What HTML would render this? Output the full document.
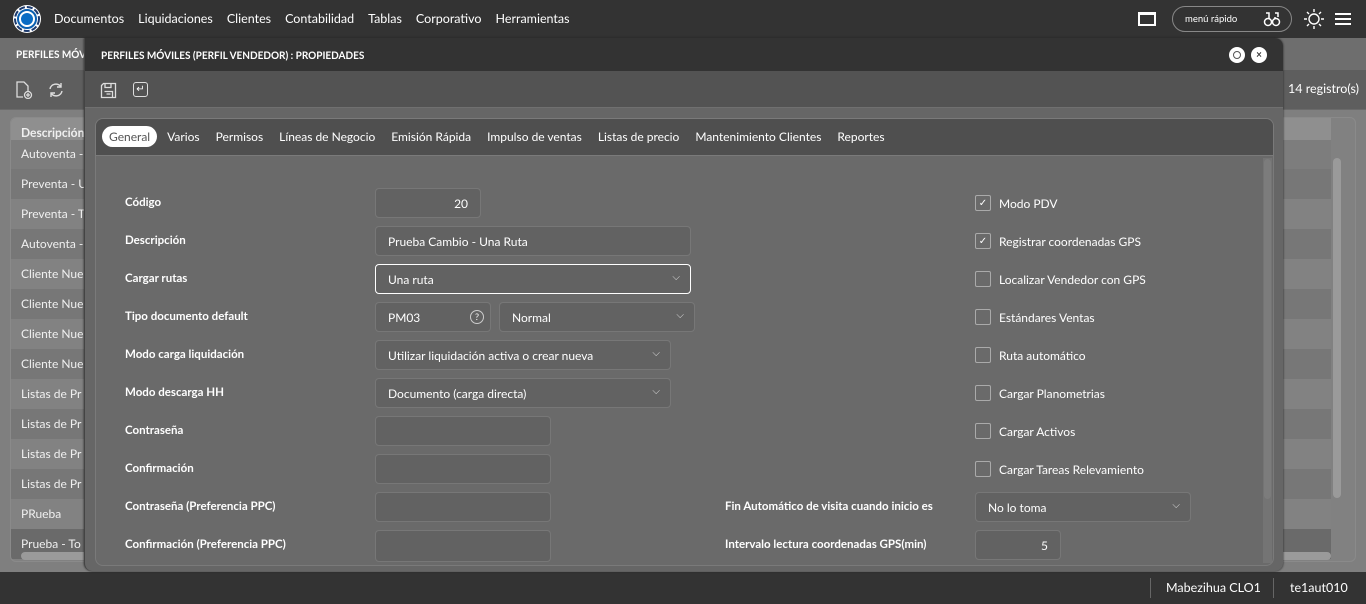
<!DOCTYPE html>
<html><head><meta charset="utf-8"><style>
*{box-sizing:border-box;margin:0;padding:0}
body{width:1366px;height:604px;overflow:hidden;background:#7f7f7f;font-family:"Lato","Liberation Sans",sans-serif;color:#fff;position:relative}
.a{position:absolute}
.top{left:0;top:0;width:1366px;height:38px;background:#333}
.nav{left:54px;top:11px;font-size:12.5px;white-space:nowrap;word-spacing:0}
.nav span{margin-right:14px;letter-spacing:0}
.sub{left:0;top:38px;width:1366px;height:32px;background:#6e6e6e}
.tb{left:0;top:70px;width:1366px;height:40px;background:#5e5e5e;border-bottom:1px solid #6a6a6a}
.list{left:10px;top:117px;width:1346px;height:445px;background:#818181;border:1px solid #8a8a8a;border-radius:6px;overflow:hidden}
.row{position:absolute;left:0;width:1320px;height:30px;font-size:12px;padding:7px 10px;color:#f0f0f0}
.foot{left:0;top:572px;width:1366px;height:32px;background:#333;font-size:12.5px}
.modal{left:84px;top:38px;width:1199px;height:533px;background:#666;border-radius:0 8px 8px 8px;box-shadow:0 0 2px #222;border-left:1px solid #444;overflow:hidden}
.mh{left:0;top:0;width:1199px;height:33px;background:#333;font-size:10px;font-weight:bold;padding:12px 16px}
.mt{left:0;top:33px;width:1199px;height:37px;background:#535353;border-bottom:1px solid #707070}
.panel{left:10px;top:80px;width:1179px;height:448px;background:#6a6a6a;border:1px solid #7a7a7a;border-radius:8px;overflow:hidden}
.tabs{left:0;top:0;width:1179px;height:37px;background:#4f4f4f;border-bottom:1px solid #7a7a7a;font-size:12px;padding:7px 0 0 6px;white-space:nowrap}
.tabs span{display:inline-block;padding:3px 6px;margin-right:4px;border-radius:12px}
.tabs span.on{background:#fff;color:#555;padding:3px 7px}
.lb{font-size:11.5px;font-weight:bold;left:125px}
.in{height:30px;background:#626262;border:1px solid #777;border-radius:4px;font-size:12px;padding:7px 12px}
.ck{width:16px;height:16px;border:1px solid #aaa;border-radius:2px;left:975px;font-size:10px;line-height:14px;text-align:center}
.cl{left:999px;font-size:12px}
.chev{position:absolute;right:10px;top:6px;font-size:10px;color:#ddd}
</style></head><body>
<div class="a top"></div>
<svg class="a" style="left:12px;top:4px" width="30" height="30" viewBox="0 0 30 30"><circle cx="15" cy="15" r="14" fill="#fff"/><circle cx="15" cy="15" r="12" fill="none" stroke="#1c3a6e" stroke-width="2" stroke-dasharray="6 2"/><circle cx="15" cy="15" r="9" fill="none" stroke="#0a5fb0" stroke-width="2"/><circle cx="15" cy="15" r="6" fill="#0a6cc4"/></svg>
<div class="a nav"><span>Documentos</span><span>Liquidaciones</span><span>Clientes</span><span>Contabilidad</span><span>Tablas</span><span>Corporativo</span><span>Herramientas</span></div>
<div class="a" style="left:1138px;top:12px;width:18px;height:14px;border:2px solid #fff;border-top-width:3px"></div>
<div class="a" style="left:1172px;top:6px;width:120px;height:26px;border:1px solid #888;border-radius:13px;font-size:9.5px;padding:7px 12px">menú rápido
<svg class="a" style="right:10px;top:4px" width="18" height="16" viewBox="0 0 18 16" fill="none" stroke="#fff" stroke-width="1.5"><path d="M3 2h3v4M12 2h3v4M6 6v2M12 6v2"/><circle cx="5" cy="11" r="3.5"/><circle cx="13" cy="11" r="3.5"/></svg></div>
<svg class="a" style="left:1303px;top:8px" width="22" height="22" viewBox="0 0 22 22" stroke="#fff" fill="none" stroke-width="1.4"><circle cx="11" cy="11" r="5"/><path d="M11 1v3M11 18v3M1 11h3M18 11h3M4 4l2 2M16 16l2 2M4 18l2-2M16 6l2-2"/></svg>
<div class="a" style="left:1335px;top:13px;width:16px;height:2px;background:#fff;box-shadow:0 5px 0 #fff,0 10px 0 #fff"></div>
<div class="a sub"><div class="a" style="left:16px;top:11px;font-size:10px;font-weight:bold">PERFILES MÓVILES</div></div>
<div class="a tb">
<svg class="a" style="left:15px;top:11px" width="18" height="18" viewBox="0 0 18 18" fill="none" stroke="#ddd" stroke-width="1.3"><path d="M8 16H2V1h7l4 4v5"/><circle cx="13" cy="14" r="3.5"/><path d="M13 12v4M11 14h4"/></svg>
<svg class="a" style="left:47px;top:11px" width="18" height="18" viewBox="0 0 18 18" fill="none" stroke="#ddd" stroke-width="1.4"><path d="M3 8a6 6 0 0 1 11-2M15 10a6 6 0 0 1-11 2"/><path d="M14 2v4h-4M4 16v-4h4"/></svg>
<div class="a" style="left:1288px;top:11px;font-size:12.5px">14 registro(s)</div></div>
<div class="a list">
<div class="row" style="top:0;background:#8f8f8f;font-weight:bold;padding-top:7px">Descripción</div>
<div class="row" style="top:22px;background:#7d7d7d;height:29px;padding-top:6px">Autoventa -</div>
<div class="row" style="top:51px;background:#777">Preventa - U</div>
<div class="row" style="top:81px;background:#828282">Preventa - T</div>
<div class="row" style="top:111px;background:#777">Autoventa -</div>
<div class="row" style="top:141px;background:#828282">Cliente Nue</div>
<div class="row" style="top:171px;background:#777">Cliente Nue</div>
<div class="row" style="top:201px;background:#828282">Cliente Nue</div>
<div class="row" style="top:231px;background:#777">Cliente Nue</div>
<div class="row" style="top:261px;background:#828282">Listas de Pr</div>
<div class="row" style="top:291px;background:#777">Listas de Pr</div>
<div class="row" style="top:321px;background:#828282">Listas de Pr</div>
<div class="row" style="top:351px;background:#777">Listas de Pr</div>
<div class="row" style="top:381px;background:#828282">PRueba</div>
<div class="row" style="top:411px;background:#6a6a6a">Prueba - To</div>
<div class="a" style="left:1322px;top:40px;width:8px;height:340px;background:#9a9a9a;border-radius:4px"></div>
<div class="a" style="left:10px;top:434px;width:1310px;height:8px;background:#9a9a9a;border-radius:4px"></div>
</div>
<div class="a foot"><div class="a" style="left:1150px;top:6px;width:1px;height:20px;background:#666"></div><div class="a" style="left:1166px;top:8px">Mabezihua CLO1</div><div class="a" style="left:1273px;top:6px;width:1px;height:20px;background:#666"></div><div class="a" style="left:1290px;top:8px">te1aut010</div></div>

<div class="a modal">
<div class="a mh">PERFILES MÓVILES (PERFIL VENDEDOR) : PROPIEDADES</div>
<div class="a" style="left:1144px;top:9px;width:16px;height:16px;border-radius:50%;background:#fff"><div style="margin:4px;width:8px;height:8px;border:1.5px solid #555;border-radius:50%"></div></div>
<div class="a" style="left:1166px;top:9px;width:16px;height:16px;border-radius:50%;background:#fff;color:#333;font-size:10px;text-align:center;line-height:16px;font-weight:bold">×</div>
<div class="a mt">
<svg class="a" style="left:15px;top:11px" width="17" height="17" viewBox="0 0 17 17" fill="none" stroke="#ddd" stroke-width="1.3"><path d="M1.5 3.5l2-2h12v14h-14z"/><path d="M5 1.5v4h6v-4M4.5 9.5h8v6M6.5 12h4"/></svg>
<div class="a" style="left:48px;top:11px;width:15px;height:15px;border:1.5px solid #ddd;border-radius:3px;font-size:10px;line-height:12px;text-align:center">&#x21b5;</div></div>
<div class="a panel">
<div class="a tabs"><span class="on">General</span><span>Varios</span><span>Permisos</span><span>Líneas de Negocio</span><span>Emisión Rápida</span><span>Impulso de ventas</span><span>Listas de precio</span><span>Mantenimiento Clientes</span><span>Reportes</span></div>
<div class="a" style="left:1167px;top:39px;width:9px;height:405px;background:#747474"><div style="margin:1px;width:7px;height:340px;background:#7c7c7c;border-radius:4px"></div></div>
</div>
</div>

<div class="a lb" style="top:196px">Código</div>
<div class="a lb" style="top:234px">Descripción</div>
<div class="a lb" style="top:272px">Cargar rutas</div>
<div class="a lb" style="top:310px">Tipo documento default</div>
<div class="a lb" style="top:348px">Modo carga liquidación</div>
<div class="a lb" style="top:386px">Modo descarga HH</div>
<div class="a lb" style="top:424px">Contraseña</div>
<div class="a lb" style="top:462px">Confirmación</div>
<div class="a lb" style="top:500px">Contraseña (Preferencia PPC)</div>
<div class="a lb" style="top:538px">Confirmación (Preferencia PPC)</div>

<div class="a in" style="left:375px;top:188px;width:106px;text-align:right">20</div>
<div class="a in" style="left:375px;top:226px;width:316px">Prueba Cambio - Una Ruta</div>
<div class="a in" style="left:375px;top:264px;width:316px;border-color:#fff">Una ruta<span class="chev">&#x2335;</span></div>
<div class="a in" style="left:375px;top:302px;width:116px">PM03<span class="a" style="right:6px;top:7px;width:14px;height:14px;border:1px solid #ccc;border-radius:50%;font-size:9px;text-align:center;line-height:12px">?</span></div>
<div class="a in" style="left:499px;top:302px;width:196px">Normal<span class="chev">&#x2335;</span></div>
<div class="a in" style="left:375px;top:340px;width:296px">Utilizar liquidación activa o crear nueva<span class="chev">&#x2335;</span></div>
<div class="a in" style="left:375px;top:378px;width:296px">Documento (carga directa)<span class="chev">&#x2335;</span></div>
<div class="a in" style="left:375px;top:416px;width:176px"></div>
<div class="a in" style="left:375px;top:454px;width:176px"></div>
<div class="a in" style="left:375px;top:492px;width:176px"></div>
<div class="a in" style="left:375px;top:530px;width:176px;height:32px"></div>

<div class="a ck" style="top:195px">&#x2713;</div><div class="a cl" style="top:196px">Modo PDV</div>
<div class="a ck" style="top:233px">&#x2713;</div><div class="a cl" style="top:234px">Registrar coordenadas GPS</div>
<div class="a ck" style="top:271px"></div><div class="a cl" style="top:272px">Localizar Vendedor con GPS</div>
<div class="a ck" style="top:309px"></div><div class="a cl" style="top:310px">Estándares Ventas</div>
<div class="a ck" style="top:347px"></div><div class="a cl" style="top:348px">Ruta automático</div>
<div class="a ck" style="top:385px"></div><div class="a cl" style="top:386px">Cargar Planometrias</div>
<div class="a ck" style="top:423px"></div><div class="a cl" style="top:424px">Cargar Activos</div>
<div class="a ck" style="top:461px"></div><div class="a cl" style="top:462px">Cargar Tareas Relevamiento</div>
<div class="a lb" style="left:725px;top:500px">Fin Automático de visita cuando inicio es</div>
<div class="a lb" style="left:725px;top:538px">Intervalo lectura coordenadas GPS(min)</div>
<div class="a in" style="left:975px;top:492px;width:216px">No lo toma<span class="chev">&#x2335;</span></div>
<div class="a in" style="left:975px;top:530px;width:86px;text-align:right">5</div>
</body></html>
